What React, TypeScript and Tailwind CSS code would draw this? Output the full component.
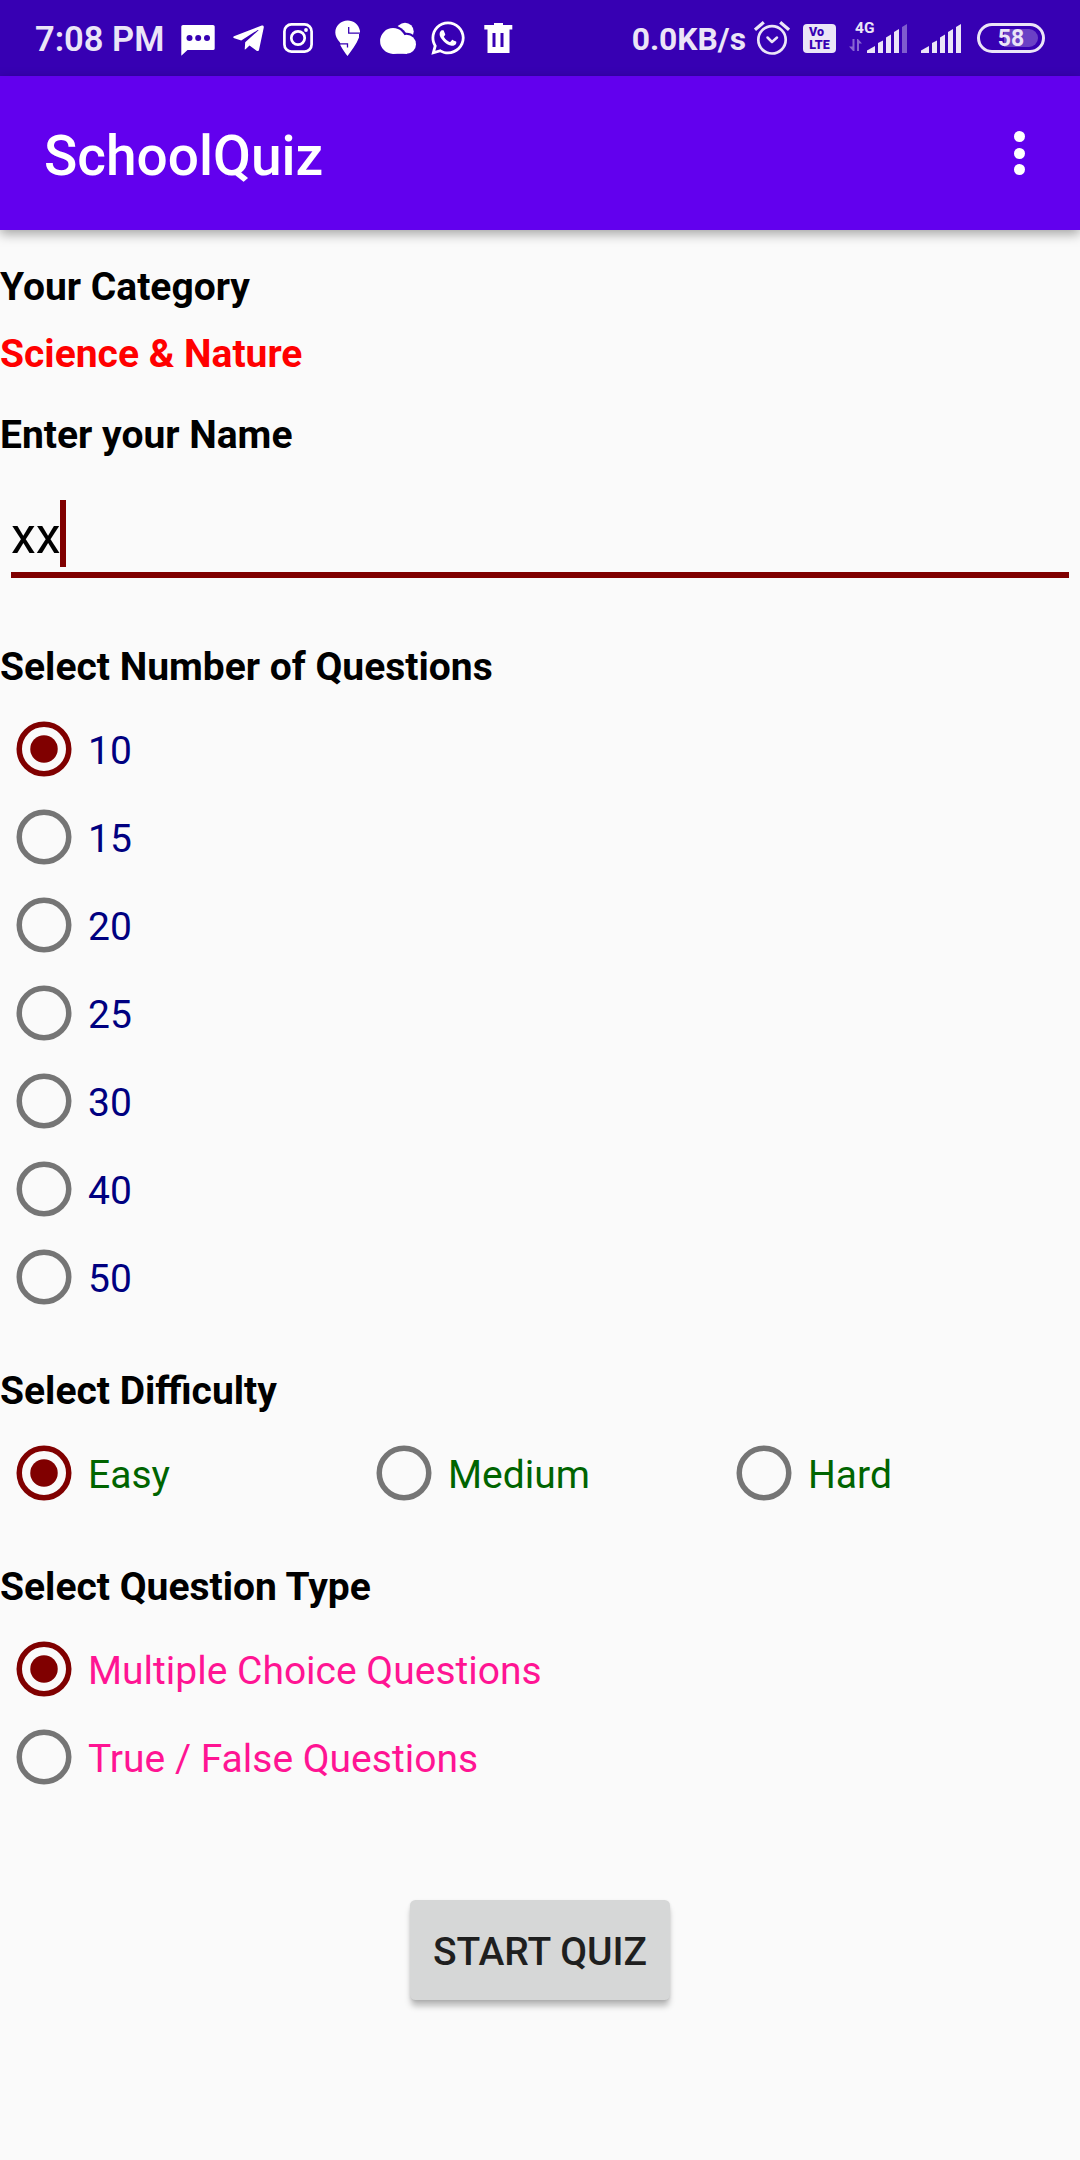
import { useState, type ReactNode } from "react";
import { FaTelegramPlane, FaWhatsapp } from "react-icons/fa";

function SmsIcon() {
  return (
    <svg className="ml-[17px] h-9 w-[34px] shrink-0" viewBox="181 20 34 36" fill="#fff">
      <path d="M183 25H213Q214.700 25 214.700 26.500V48.500Q214.700 50 213 50H187.500L181.300 55.800V26.500Q181.300 25 183 25Z" />
      <g fill="#3700b3">
        <circle cx="189.500" cy="38" r="3" />
        <circle cx="198.200" cy="38" r="3" />
        <circle cx="207" cy="38" r="3" />
      </g>
    </svg>
  );
}

function InstagramIcon() {
  return (
    <svg className="ml-[16px] h-8 w-8 shrink-0" viewBox="282 22 32 32" fill="none" stroke="#fff">
      <rect x="284.400" y="24.400" width="27.200" height="27.200" rx="7" strokeWidth="2.700" />
      <circle cx="298" cy="38" r="6.700" strokeWidth="2.700" />
      <circle cx="306" cy="30" r="1.900" fill="#fff" stroke="none" />
    </svg>
  );
}

function PinIcon() {
  return (
    <svg className="ml-[20px] h-9 w-[28px] shrink-0" viewBox="334 20 28 36">
      <path
        fill="#fff"
        d="M347.700 20.500C341 20.500 335.300 25.800 335.300 32.500C335.300 36 337 39 340 42.500L340.500 45.500C343 50 345.500 53.500 347.500 56C351.500 50.500 356.500 44.500 359 37.500V34H360V31C358.800 24.500 353.500 20.500 347.700 20.500Z"
      />
      <path
        fill="none"
        stroke="#3700b3"
        strokeWidth="1.300"
        d="M348.700 27V33.200H360.500M338 43.800H347.500V47.500"
      />
    </svg>
  );
}

function CloudIcon() {
  return (
    <svg className="ml-[17px] h-8 w-[38px] shrink-0" viewBox="379 22 38 32" fill="#fff">
      <circle cx="405" cy="31.500" r="8.700" />
      <g fill="#3700b3">
        <circle cx="393" cy="41" r="15.200" />
        <circle cx="406.500" cy="44.300" r="11.600" />
      </g>
      <circle cx="393" cy="41" r="12.900" />
      <circle cx="406.500" cy="44.300" r="9.500" />
      <rect x="393" y="43" width="14" height="10.800" />
    </svg>
  );
}

function TrashIcon() {
  return (
    <svg className="ml-[17px] h-8 w-[30px] shrink-0" viewBox="484 22 30 32">
      <path fill="#fff" d="M494 25V23H503V25H512.300V29.500H509.500V53H487.500V29.500H484.300V25Z" />
      <path fill="#3700b3" d="M492.500 33H495.500V47H492.500ZM500.500 33H503.500V47H500.500Z" />
    </svg>
  );
}

function AlarmIcon() {
  return (
    <svg className="ml-2 h-9 w-9 shrink-0" viewBox="754 20 36 36" fill="none" stroke="#ebe5f7" strokeLinecap="round">
      <circle cx="772" cy="39.800" r="13.700" strokeWidth="2.700" />
      <path strokeWidth="2.500" strokeLinejoin="round" d="M767.500 37.500L772 42L777 37.500" />
      <path strokeWidth="3.200" strokeLinecap="butt" d="M755 29.800L763.800 22.200M780.200 22.200L789 29.800" />
    </svg>
  );
}

function VolteIcon() {
  return (
    <div className="ml-[13px] flex h-[29px] w-[33px] shrink-0 flex-col items-center justify-center rounded-[4px] bg-[#ebe5f7] text-[12.500px] leading-[13px] font-black text-[#3700b3]">
      <span className="-ml-[6px] h-[13px]">Vo</span>
      <span className="h-[13px]">LTE</span>
    </div>
  );
}

function NetworkIcon() {
  return (
    <div className="ml-[13px] flex h-8 w-[26px] shrink-0 flex-col">
      <span className="ml-[6px] h-[13px] text-[15.500px] leading-[13px] font-bold">4G</span>
      <svg className="mt-[4px] h-[13px] w-[14px]" viewBox="850 40 14 13" fill="#8866d1">
        <path d="M853.500 40H855.500V52H854L850 47.500H853.500ZM858 40H859L863 44.500H860V52H858Z" />
      </svg>
    </div>
  );
}

const bars = [
  "M0 29V26.500L8 22V29Z",
  "M11 29V19L16 16.500V29Z",
  "M19 29V13.500L24 10.500V29Z",
  "M27 29V8L32 5V29Z",
  "M35 29V3L40 0V29Z",
];

function SignalIcon({ level, className }: { level: number; className: string }) {
  return (
    <svg className={className} viewBox="0 0 40 29" fill="#ebe5f7">
      {bars.map((d, i) => (
        <path key={d} d={d} opacity={i < level ? 1 : 0.4} />
      ))}
    </svg>
  );
}

function Battery() {
  return (
    <div className="relative ml-[16px] flex h-[30px] w-[68px] shrink-0 items-center justify-center rounded-full border-[3px] border-[#ebe5f7]">
      <div className="absolute top-[3px] left-[24px] h-[18px] w-[34px] rounded-r-full bg-[#6b41c5]" />
      <span className="relative text-[23px] leading-none font-bold">58</span>
    </div>
  );
}

function StatusBar() {
  return (
    <div className="flex h-[76px] items-start bg-[#3700b3] pr-[35px] pl-[35px] text-[#ebe5f7]">
      <span className="mt-[19px] w-[129px] text-[34.500px] leading-[40px] font-semibold whitespace-nowrap">7:08 PM</span>
      <div className="flex h-[76px] items-center">
        <SmsIcon />
        <FaTelegramPlane className="ml-[16px] size-[35px] shrink-0 text-white" />
        <InstagramIcon />
        <PinIcon />
        <CloudIcon />
        <FaWhatsapp className="ml-[12px] size-[38px] shrink-0 text-white" />
        <TrashIcon />
      </div>
      <span className="mt-[19px] ml-auto text-[31.800px] leading-[40px] font-bold whitespace-nowrap">0.0KB/s</span>
      <div className="flex h-[76px] items-center">
        <AlarmIcon />
        <VolteIcon />
        <NetworkIcon />
        <SignalIcon level={4} className="-ml-[8px] h-[29px] w-[40px] shrink-0" />
        <SignalIcon level={5} className="ml-[14px] h-[29px] w-[40px] shrink-0" />
        <Battery />
      </div>
    </div>
  );
}

function AppBar() {
  return (
    <header className="flex h-[154px] items-center justify-between bg-[#6200ee] pr-[55px] pl-[44px] text-white shadow-[0_4px_11px_rgba(0,0,0,0.35)]">
      <h1 className="mt-[6px] text-[55px] leading-[64px] font-medium">SchoolQuiz</h1>
      <button aria-label="More options" className="flex flex-col gap-[5.500px]">
        <span className="size-[11px] rounded-full bg-white" />
        <span className="size-[11px] rounded-full bg-white" />
        <span className="size-[11px] rounded-full bg-white" />
      </button>
    </header>
  );
}

function Heading({ children, className }: { children: ReactNode; className: string }) {
  return <h2 className={`text-[39px] leading-[52px] font-bold ${className}`}>{children}</h2>;
}

type RadioListProps = {
  options: string[];
  initial: string;
  name: string;
  className: string;
};

function RadioList({ options, initial, name, className }: RadioListProps) {
  const [value, setValue] = useState(initial);
  return (
    <div role="radiogroup" aria-label={name} className={`mt-3 grid ${className}`}>
      {options.map((option) => (
        <button
          key={option}
          role="radio"
          aria-checked={value === option}
          onClick={() => setValue(option)}
          className="flex h-[88px] items-center pl-4"
        >
          <svg
            className={value === option ? "size-14 text-[#800000]" : "size-14 text-[#757575]"}
            viewBox="0 0 56 56"
          >
            <circle cx="28" cy="28" r="24.750" fill="none" stroke="currentColor" strokeWidth="5.500" />
            {value === option && <circle cx="28" cy="28" r="13.750" fill="currentColor" />}
          </svg>
          <span className="mt-[4px] ml-4 text-[39px] leading-[52px]">{option}</span>
        </button>
      ))}
    </div>
  );
}

export default function App() {
  return (
    <div className="flex h-[2160px] w-[1080px] flex-col overflow-hidden bg-[#fafafa] font-['Roboto',sans-serif] text-black">
      <StatusBar />
      <AppBar />
      <main className="flex flex-col pt-[31px]">
        <Heading className="">Your Category</Heading>
        <Heading className="mt-[15px] text-[#ff0000]">Science &amp; Nature</Heading>
        <Heading className="mt-[29px]">Enter your Name</Heading>
        <div className="mx-[11px] mt-[39px] flex h-[78px] items-start border-b-[6px] border-[#800000]">
          <span className="mt-[3px] w-[49px] text-[50px] leading-[67px]">xx</span>
          <span className="h-[67px] w-[6px] bg-[#800000]" />
        </div>
        <Heading className="mt-[63px]">Select Number of Questions</Heading>
        <RadioList
          name="Number of questions"
          options={["10", "15", "20", "25", "30", "40", "50"]}
          initial="10"
          className="grid-cols-1 text-[#000080]"
        />
        <Heading className="mt-[44px]">Select Difficulty</Heading>
        <RadioList
          name="Difficulty"
          options={["Easy", "Medium", "Hard"]}
          initial="Easy"
          className="grid-cols-3 text-[#006400]"
        />
        <Heading className="mt-[44px]">Select Question Type</Heading>
        <RadioList
          name="Question type"
          options={["Multiple Choice Questions", "True / False Questions"]}
          initial="Multiple Choice Questions"
          className="grid-cols-1 text-[#ff1493]"
        />
        <button className="mt-[99px] flex h-[100px] w-[260px] items-center justify-center self-center rounded-[5.500px] bg-[#d6d7d7] pt-[5px] text-[39px] font-medium whitespace-nowrap text-[#1f1f1f] shadow-[0_7px_6px_-1px_rgba(0,0,0,0.26),0_1px_3px_rgba(0,0,0,0.10)]">
          START QUIZ
        </button>
      </main>
    </div>
  );
}
